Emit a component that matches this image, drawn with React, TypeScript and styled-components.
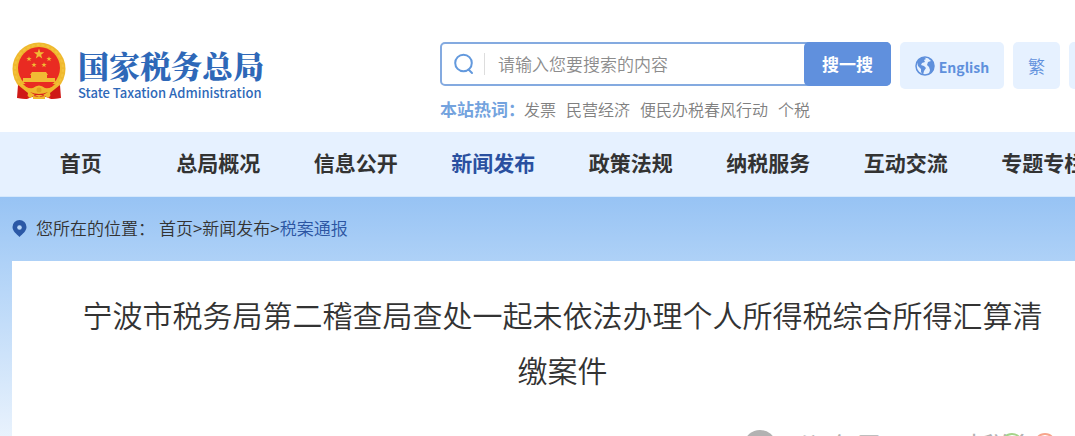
import React from "react";
import styled, { createGlobalStyle } from "styled-components";

const GlobalStyle = createGlobalStyle`
  *, *::before, *::after { box-sizing: border-box; }
  html, body { margin: 0; padding: 0; }
  body {
    background: #fff;
    color: #333;
    font-family: "Noto Sans CJK SC", sans-serif;
    font-size: 17px;
    font-weight: 350;
    overflow-x: hidden;
  }
  a { color: inherit; text-decoration: none; }
  button, input { font-family: inherit; font-weight: inherit; }
`;

const Page = styled.div`
  min-height: 100vh;
  overflow: hidden;
`;

const Header = styled.header`
  display: flex;
  align-items: flex-start;
  min-width: 1116px;
  height: 132px;
  padding: 42px 0 0 12px;
`;

const Brand = styled.a`
  display: flex;
  flex-shrink: 0;
  gap: 12px;
  width: 428px;
  color: #2e68b8;
`;

const BrandText = styled.div`
  display: flex;
  flex-direction: column;
  padding-top: 2px;
`;

const BrandName = styled.span`
  font-family: "Noto Serif CJK SC", "Noto Sans CJK SC", serif;
  font-weight: 900;
  font-size: 31px;
  line-height: 42px;
`;

const BrandSub = styled.span`
  font-weight: 500;
  font-size: 13px;
  line-height: 14px;
  white-space: nowrap;
`;

const SearchArea = styled.div`
  flex-shrink: 0;
  width: 451px;
  margin-right: 9px;
`;

const SearchForm = styled.form`
  display: flex;
  align-items: center;
  height: 44px;
  padding-left: 12px;
  border: 2px solid #84aae0;
  border-radius: 5px;
`;

const SearchInput = styled.input`
  flex: 1;
  min-width: 0;
  height: 22px;
  margin-left: 10px;
  padding: 0 0 2px 13px;
  border: 0;
  border-left: 1px solid #ddd;
  outline: 0;
  background: transparent;
  font-size: 17px;
  color: #333;
  &::placeholder { color: #8c8c8c; opacity: 1; }
`;

const SearchButton = styled.button`
  width: 87px;
  height: 44px;
  margin-right: -2px;
  padding: 0 0 2px;
  border: 0;
  border-radius: 5px;
  background: #6090dd;
  color: #fff;
  font-size: 17px;
  font-weight: 700;
`;

const HotWords = styled.div`
  display: flex;
  gap: 10px;
  margin-top: 11px;
  font-size: 16px;
  line-height: 24px;
  color: #808080;
  white-space: nowrap;
`;

const HotLabel = styled.strong`
  width: 74px;
  font-size: 17px;
  color: #74a3de;
`;

const Tools = styled.div`
  display: flex;
  gap: 9px;
`;

const ToolButton = styled.button<{ $width: number }>`
  display: flex;
  align-items: center;
  justify-content: center;
  gap: 4px;
  width: ${(p) => p.$width}px;
  height: 47px;
  padding: 0;
  border: 0;
  border-radius: 5px;
  background: #e6f1ff;
  color: #5f90dc;
  font-size: 17px;
`;

const EnglishLabel = styled.span`
  padding-top: 2px;
  font-size: 14px;
  font-weight: 700;
`;

const Nav = styled.nav`
  background: #e6f1ff;
  border-bottom: 1px solid #d5e8fc;
`;

const NavList = styled.ul`
  display: grid;
  grid-template-columns: repeat(8, 1fr);
  min-width: 1100px;
  margin: 0 0 0 12px;
  padding: 0 0 4px;
  list-style: none;
`;

const NavItem = styled.li<{ $active?: boolean }>`
  text-align: center;
  font-size: 21px;
  font-weight: 700;
  line-height: 60px;
  color: ${(p) => (p.$active ? "#2a50a0" : "#333")};
`;

const Main = styled.main`
  background: linear-gradient(#97c3f4 0, #aed1f7 64px, #ecf4fd 250px, #fff 300px);
`;

const Crumbs = styled.nav`
  display: flex;
  align-items: center;
  height: 64px;
  padding: 0 0 2px 12px;
  line-height: 24px;
  color: #333;
  white-space: nowrap;
`;

const CrumbLabel = styled.span`
  flex-shrink: 0;
  width: 132px;
  padding-left: 9px;
`;

const CurrentCrumb = styled.a`
  && { color: #2b55a2; }
`;

const Article = styled.article`
  min-width: 1101px;
  margin-left: 12px;
  padding: 26px 60px 0;
  background: #fff;
`;

const Title = styled.h1`
  margin: 0;
  font-size: 30px;
  font-weight: 350;
  line-height: 55px;
  text-align: center;
`;

const Watermark = styled.div`
  position: relative;
  display: flex;
  align-items: flex-start;
  width: 312px;
  margin: 33px 0 0 672px;
  color: #b2b2b2;
  font-size: 30px;
  line-height: 32px;
  white-space: nowrap;
`;

const WatermarkName = styled.span`
  margin: 0 66px 0 18px;
`;

const WatermarkRings = styled.svg`
  position: absolute;
  top: 2px;
  right: 0;
`;

const menu = ["首页", "总局概况", "信息公开", "新闻发布", "政策法规", "纳税服务", "互动交流", "专题专栏"];
const hotWords = ["发票", "民营经济", "便民办税春风行动", "个税"];

const star = (cx: number, cy: number, r: number) =>
  Array.from({ length: 10 }, (_, i) => {
    const a = (Math.PI / 5) * i - Math.PI / 2;
    const d = i % 2 ? r * 0.4 : r;
    return `${cx + d * Math.cos(a)},${cy + d * Math.sin(a)}`;
  }).join(" ");

const Emblem = () => (
  <svg width="54" height="58" viewBox="0 0 54 58" aria-hidden="true">
    <path d="M7 40 6 56l9 1 5-2 7 1 7-1 5 2 9-1-1-16z" fill="#d8201c" />
    <circle cx="27" cy="27" r="26.5" fill="#efb92e" />
    <circle cx="27" cy="27" r="24" fill="none" stroke="#f3c23c" strokeWidth="2" strokeDasharray="3 2" />
    <circle cx="27" cy="26" r="21" fill="#e92b22" />
    <g fill="#f1bb34">
      <polygon points={star(27, 12, 5.5)} />
      <polygon points={star(17, 17, 2.8)} />
      <polygon points={star(37, 17, 2.8)} />
      <polygon points={star(22, 23, 2.8)} />
      <polygon points={star(32, 23, 2.8)} />
      <path d="M20 30h14l2 3H18zM19 33h16v3h8v4H11v-4h8z" />
    </g>
    <path d="M11 42h32q-6 7-16 7t-16-7z" fill="#e92b22" />
    <path d="M7 42q9 5 14 4 6-5 12 0 5 1 14-4l-4 8-7 6-5-3-4 2-4-2-5 3-7-6z" fill="#efb92e" />
    <path d="M18 50q9 4 18 0l-5 3h-8z" fill="#d8201c" />
    <circle cx="27" cy="48" r="2.5" fill="#e0a120" />
    <path d="M6 43l10 8-1 6-10-1zM48 43l-10 8 1 6 10-1z" fill="#cf1917" />
    <path d="M21 54l6 1 6-1v3H21z" fill="#efb92e" />
  </svg>
);

const SearchIcon = () => (
  <svg width="20" height="22" viewBox="0 0 20 22" fill="none" stroke="#6399dd" strokeWidth="2" strokeLinecap="round" aria-hidden="true">
    <circle cx="9.5" cy="10" r="8.3" />
    <path d="M14.5 16.5 18 20" />
  </svg>
);

const GlobeIcon = () => (
  <svg width="20" height="20" viewBox="0 0 20 20" aria-hidden="true">
    <circle cx="10" cy="10" r="9" fill="#e6f1ff" stroke="#5f90dc" strokeWidth="1.5" />
    <path d="M2 6Q4 2 9 1l2 2-2 1 1 2-3 1-1 2 3 1 2 2-2 3-1 4-2-3v-3L3 10zM13 2q4 1 6 6v5q-2 4-5 5l1-4-1-3-2-2 1-3 3-1-2-2z" fill="#5f90dc" />
  </svg>
);

const PinIcon = () => (
  <svg width="15" height="17" viewBox="0 0 15 17" aria-hidden="true">
    <path d="M7.5 0a7 7 0 0 1 7 7c0 4-4 7-7 10-3-3-7-6-7-10a7 7 0 0 1 7-7z" fill="#2b58a6" />
    <circle cx="7.5" cy="7.5" r="2.3" fill="#b9d7f8" />
  </svg>
);

export default function App() {
  return (
    <Page>
      <GlobalStyle />
      <Header>
        <Brand href="#">
          <Emblem />
          <BrandText>
            <BrandName>国家税务总局</BrandName>
            <BrandSub>State Taxation Administration</BrandSub>
          </BrandText>
        </Brand>
        <SearchArea>
          <SearchForm role="search">
            <SearchIcon />
            <SearchInput type="text" aria-label="搜索" placeholder="请输入您要搜索的内容" />
            <SearchButton type="button">搜一搜</SearchButton>
          </SearchForm>
          <HotWords>
            <HotLabel>本站热词：</HotLabel>
            {hotWords.map((w) => (
              <a href="#" key={w}>{w}</a>
            ))}
          </HotWords>
        </SearchArea>
        <Tools>
          <ToolButton $width={104}>
            <GlobeIcon />
            <EnglishLabel>English</EnglishLabel>
          </ToolButton>
          <ToolButton $width={47}>繁</ToolButton>
          <ToolButton $width={47} aria-label="无障碍" />
        </Tools>
      </Header>
      <Nav aria-label="主导航">
        <NavList>
          {menu.map((m) => (
            <NavItem key={m} $active={m === "新闻发布"}>
              <a href="#">{m}</a>
            </NavItem>
          ))}
        </NavList>
      </Nav>
      <Main>
        <Crumbs aria-label="位置">
          <PinIcon />
          <CrumbLabel>您所在的位置：</CrumbLabel>
          <a href="#">首页</a>&gt;<a href="#">新闻发布</a>&gt;
          <CurrentCrumb href="#">税案通报</CurrentCrumb>
        </Crumbs>
        <Article>
          <Title>宁波市税务局第二稽查局查处一起未依法办理个人所得税综合所得汇算清缴案件</Title>
          <Watermark>
            <svg width="32" height="28" viewBox="0 0 32 28" aria-hidden="true">
              <ellipse cx="16" cy="13" rx="15" ry="13" fill="#b2b2b2" />
            </svg>
            <WatermarkName>公众号</WatermarkName>
            <span>时税务</span>
            <WatermarkRings width="56" height="24" viewBox="0 0 56 24" fill="none" strokeWidth="2" aria-hidden="true">
              <circle cx="12" cy="12" r="10" stroke="#a5d48a" />
              <circle cx="45" cy="12" r="10" stroke="#f7a58c" />
            </WatermarkRings>
          </Watermark>
        </Article>
      </Main>
    </Page>
  );
}
